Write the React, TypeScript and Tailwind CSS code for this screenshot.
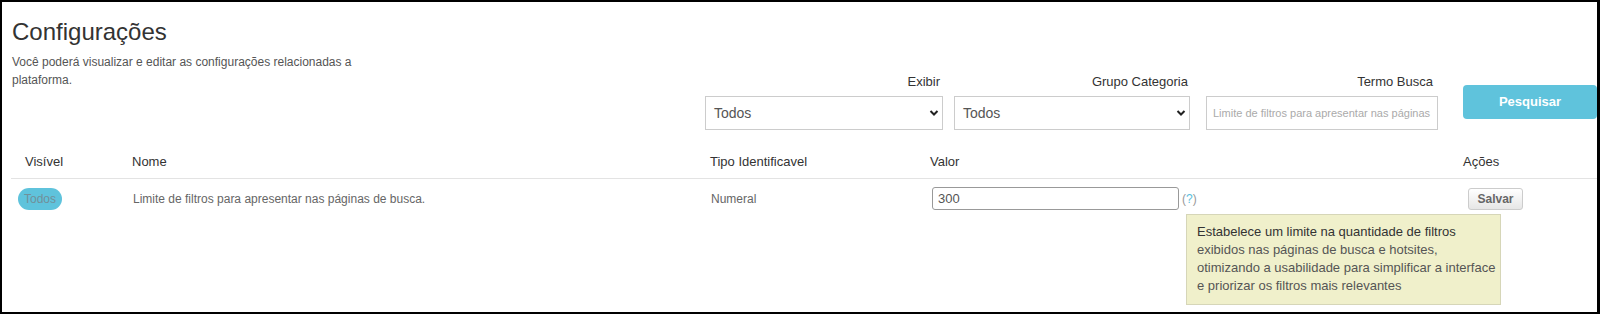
import React from "react";

function FakeSelect({ width }: { width: string }) {
  return (
    <div className={`relative ${width} h-[34px] border border-[#ccc] bg-white flex items-center pl-[8px]`}>
      <span className="text-[14px] text-[#555]">Todos</span>
      <svg width="10" height="7" viewBox="0 0 10 7" className="absolute right-[3px] top-1/2 -translate-y-1/2">
        <polyline points="1.5,1.5 5,5 8.5,1.5" fill="none" stroke="#222" strokeWidth="2" />
      </svg>
    </div>
  );
}

export default function App() {
  return (
    <div className="relative h-[314px] w-[1600px] overflow-hidden border-l-2 border-t-2 border-r-[3px] border-b-2 border-black bg-white font-['Liberation_Sans',Arial,sans-serif]">
      <div className="flex items-start">
        <div className="pl-[10px]">
          <h1 className="mt-[16px] text-[24px] leading-[28px] text-[#333]">Configurações</h1>
          <p className="mt-[7px] w-[340px] text-[12px] leading-[18px] text-[#555]">
            Você poderá visualizar e editar as configurações relacionadas a plataforma.
          </p>
        </div>
        <div className="ml-auto mt-[71px] flex items-start">
          <div className="flex w-[238px] flex-col">
            <div className="pr-[3px] text-right text-[13px] leading-[18px] text-[#333]">Exibir</div>
            <div className="mt-[5px]">
              <FakeSelect width="w-[238px]" />
            </div>
          </div>
          <div className="ml-[11px] flex w-[236px] flex-col">
            <div className="pr-[2px] text-right text-[13px] leading-[18px] text-[#333]">Grupo Categoria</div>
            <div className="mt-[5px]">
              <FakeSelect width="w-[236px]" />
            </div>
          </div>
          <div className="ml-[16px] flex w-[232px] flex-col">
            <div className="pr-[5px] text-right text-[13px] leading-[18px] text-[#333]">Termo Busca</div>
            <input
              className="mt-[5px] h-[34px] w-[232px] border border-[#ccc] bg-white px-[6px] text-[11px] text-[#555] outline-none placeholder:text-[#aaa]"
              placeholder="Limite de filtros para apresentar nas páginas de busca."
            />
          </div>
          <button className="ml-[25px] mt-[12px] h-[34px] w-[134px] rounded-[4px] bg-[#5fc3dc] text-[13px] font-bold text-white">
            Pesquisar
          </button>
        </div>
      </div>

      <div className="ml-[9px] mt-[15px]">
        <div className="grid h-[34px] grid-cols-[114px_578px_220px_533px_1fr] items-center border-b border-[#e3e3e3] text-[13px] text-[#333]">
          <div className="pl-[14px]">Visível</div>
          <div className="pl-[7px]">Nome</div>
          <div className="pl-[7px]">Tipo Identificavel</div>
          <div className="pl-[7px]">Valor</div>
          <div className="pl-[7px]">Ações</div>
        </div>
        <div className="grid grid-cols-[114px_578px_220px_533px_1fr] items-center pt-[8px] text-[12px] text-[#666]">
          <div className="pl-[7px]">
            <span className="inline-flex h-[22px] w-[44px] items-center justify-center rounded-full bg-[#5fc3dc] text-[12px] text-[#71909a]">
              Todos
            </span>
          </div>
          <div className="pl-[8px]">Limite de filtros para apresentar nas páginas de busca.</div>
          <div className="pl-[8px]">Numeral</div>
          <div className="flex items-center pl-[9px]">
            <input
              className="h-[23px] w-[247px] rounded-[3px] border border-[#999] bg-white px-[5px] text-[13px] text-[#555] outline-none"
              defaultValue="300"
            />
            <span className="relative ml-[3px] text-[12px] leading-[18px] text-[#999]">
              (<span className="text-[#5bc0de]">?</span>)
              <div className="absolute left-[4px] top-[24px] z-10 w-[315px] border border-[#d6d6b8] bg-[#f0f0cb] px-[10px] py-[8px] text-[13px] leading-[18.3px] text-[#555] whitespace-nowrap">
                <div className="text-[#333]">Estabelece um limite na quantidade de filtros</div>
                <div>exibidos nas páginas de busca e hotsites,</div>
                <div>otimizando a usabilidade para simplificar a interface</div>
                <div>e priorizar os filtros mais relevantes</div>
              </div>
            </span>
          </div>
          <div className="pl-[12px]">
            <button className="h-[22px] w-[55px] rounded-[3px] border border-[#ccc] bg-gradient-to-b from-white to-[#e6e6e6] text-[12px] font-bold text-[#666]">
              Salvar
            </button>
          </div>
        </div>
      </div>
    </div>
  );
}
